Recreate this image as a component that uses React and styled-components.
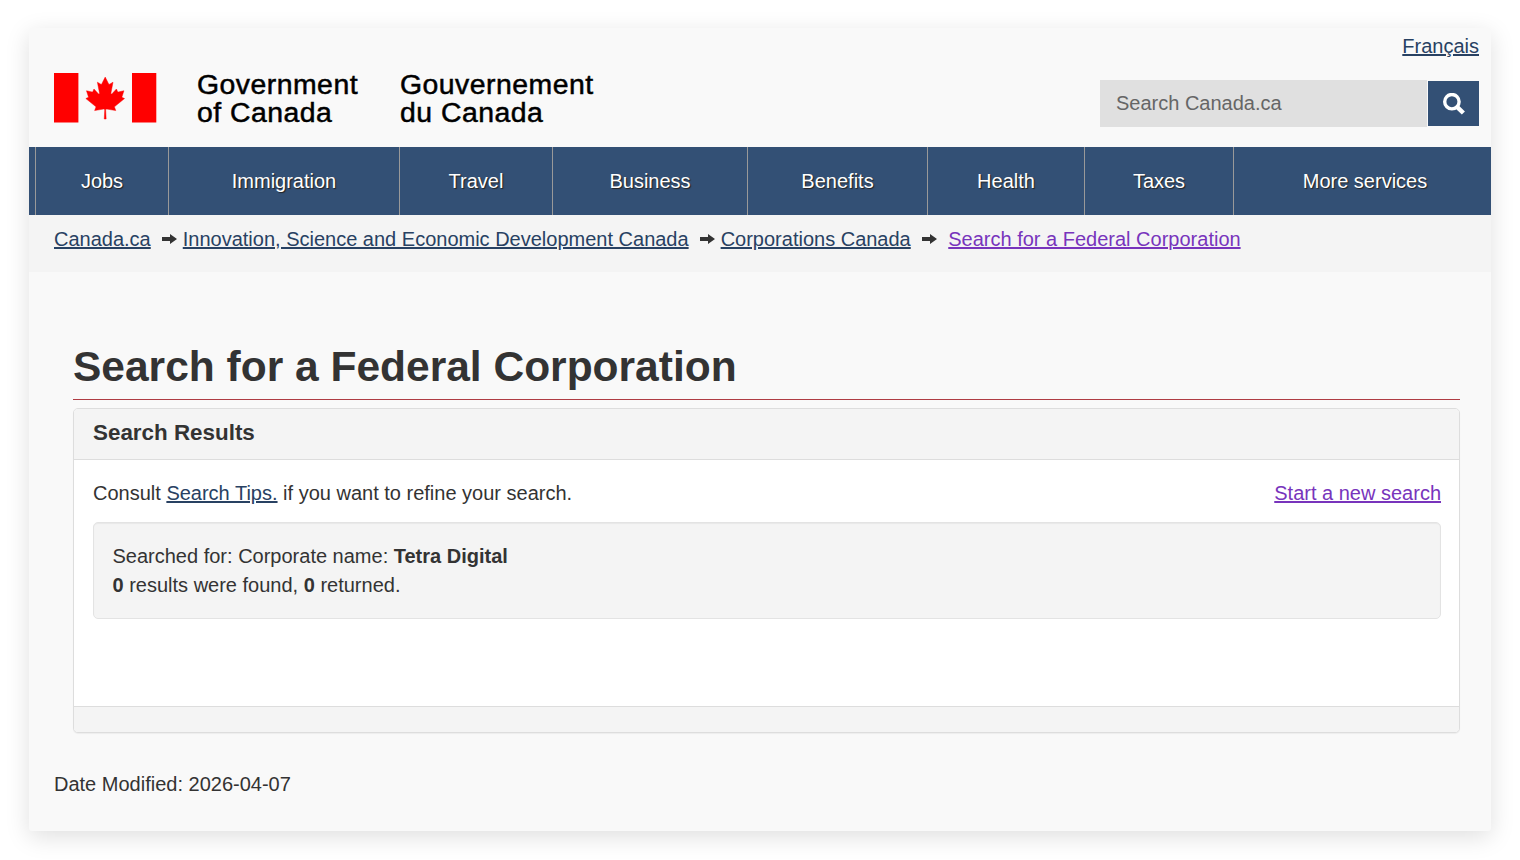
import React from 'react';
import styled, { createGlobalStyle } from 'styled-components';

const menu = [
  { text: 'Jobs', width: 133 },
  { text: 'Immigration', width: 231 },
  { text: 'Travel', width: 153 },
  { text: 'Business', width: 195 },
  { text: 'Benefits', width: 180 },
  { text: 'Health', width: 157 },
  { text: 'Taxes', width: 149 },
];

const crumbs = [
  { text: 'Canada.ca' },
  { text: 'Innovation, Science and Economic Development Canada' },
  { text: 'Corporations Canada' },
  { text: 'Search for a Federal Corporation', visited: true },
];

const GlobalStyle = createGlobalStyle`
  * {
    box-sizing: border-box;
  }
  body {
    min-height: 860px;
    margin: 0;
    padding: 28px 29px 29px;
    background: #fff;
    color: #333;
    font-family: 'Liberation Sans', Arial, sans-serif;
    font-size: 20px;
    line-height: 29px;
  }
`;

const Page = styled.div`
  width: 1462px;
  height: 803px;
  background: #f9f9f9;
  border-radius: 3px;
  box-shadow: 0 6px 24px rgba(0, 0, 0, 0.13);
`;
const Link = styled.a`
  color: ${({ $visited }) => ($visited ? '#7834bc' : '#284162')};
  text-decoration: underline;
  cursor: pointer;
`;

const Header = styled.header`
  display: flex;
  justify-content: space-between;
  height: 119px;
  padding: 0 12px 0 25px;
`;
const Brand = styled.div`
  display: flex;
  padding-top: 45px;
`;
const Flag = styled.svg`
  display: block;
  width: 103px;
  height: 50px;
`;
const BrandText = styled.div`
  width: ${({ $width }) => $width}px;
  color: #000;
  font-size: 28.4px;
  line-height: 28px;
  letter-spacing: 0.48px;
  white-space: nowrap;
  -webkit-text-stroke: 0.5px #000;
`;
const BrandNames = styled.div`
  display: flex;
  margin: -3px 0 0 40px;
`;
const Tools = styled.div`
  display: flex;
  flex-direction: column;
  align-items: flex-end;
  padding-top: 4px;
`;
const SearchForm = styled.form`
  display: flex;
  align-items: center;
  gap: 1px;
  margin-top: 19px;
`;
const SearchInput = styled.input`
  width: 327px;
  height: 47px;
  padding: 0 16px;
  border: 0;
  background: #e0e0e0;
  font: inherit;

  &::placeholder {
    color: #666;
    opacity: 1;
  }
`;
const SearchButton = styled.button`
  display: flex;
  align-items: center;
  justify-content: center;
  width: 51px;
  height: 45px;
  padding: 0;
  border: 0;
  background: #335075;
`;

const Menu = styled.nav`
  display: flex;
  height: 68px;
  padding-left: 6px;
  background: #335075;
`;
const MenuItem = styled.a`
  display: flex;
  align-items: center;
  justify-content: center;
  width: ${({ $width }) => $width}px;
  border-left: 1px solid #999;
  color: #fff;
  text-shadow: 1px 1px 1px #222;
`;
const LastMenuItem = styled(MenuItem)`
  width: auto;
  flex: 1;
  padding-left: 5px;
`;

const Breadcrumb = styled.div`
  display: flex;
  height: 57px;
  padding: 10px 25px 0;
  background: #f4f4f4;
  white-space: nowrap;
`;
const Arrow = styled.svg`
  flex: none;
  width: 15px;
  height: 11px;
  margin: 9px ${({ $gap }) => $gap}px 0 11.5px;
`;

const Main = styled.main`
  padding: 66px 31px 0 44px;
`;
const Title = styled.h1`
  height: 62px;
  margin: 0 0 8px;
  border-bottom: 1px solid #af3c43;
  font-size: 42.5px;
  line-height: 58px;
`;
const Panel = styled.section`
  display: flex;
  flex-direction: column;
  height: 325px;
  border: 1px solid #ddd;
  border-radius: 5px;
  background: #fff;
  box-shadow: 0 1px 1px rgba(0, 0, 0, 0.05);
  overflow: hidden;
`;
const PanelHeading = styled.h2`
  height: 51px;
  margin: 0;
  padding: 9px 19px;
  border-bottom: 1px solid #ddd;
  background: #f4f4f4;
  font-size: 22.4px;
  line-height: 29px;
`;
const PanelBody = styled.div`
  flex: 1;
  padding: 19px 18px 0 19px;
`;
const PanelFooter = styled.div`
  height: 26px;
  border-top: 1px solid #ddd;
  background: #f4f4f4;
`;
const Row = styled.div`
  display: flex;
  justify-content: space-between;
`;
const Well = styled.div`
  height: 97px;
  margin-top: 14px;
  padding: 19px 18.5px;
  border: 1px solid #e3e3e3;
  border-radius: 5px;
  background: #f4f4f4;
  box-shadow: inset 0 1px 1px rgba(0, 0, 0, 0.05);
`;
const DateModified = styled.footer`
  padding: 37px 25px 0;
`;

const CanadaFlag = () => (
  <Flag viewBox="0 0 103 50">
    <path fill="#f00" d="M0 0h24.4v49.6H0zM78 0h24.3v49.6H78z" />
    <path
      fill="#f00"
      stroke="#f00"
      strokeWidth="45"
      transform="translate(51.2 24.9) scale(.0104)"
      d="m-90 2030 45-863a95 95 0 0 0-111-98l-859 151 116-320a65 65 0 0 0-20-73l-941-762 212-99a65 65 0 0 0 34-79l-186-572 542 115a65 65 0 0 0 73-38l105-247 423 454a65 65 0 0 0 111-57l-204-1052 327 189a65 65 0 0 0 91-27l332-652 332 652a65 65 0 0 0 91 27l327-189-204 1052a65 65 0 0 0 111 57l423-454 105 247a65 65 0 0 0 73 38l542-115-186 572a65 65 0 0 0 34 79l212 99-941 762a65 65 0 0 0-20 73l116 320-859-151a95 95 0 0 0-111 98l45 863z"
    />
  </Flag>
);

const SearchIcon = () => (
  <svg width="22" height="22" viewBox="0 0 22 22" fill="none" stroke="#fff">
    <circle cx="8.9" cy="8.7" r="7.2" strokeWidth="3.4" />
    <path d="M14 13.8l6.4 6.2" strokeWidth="4.4" />
  </svg>
);

const App = () => {
  return (
    <>
      <GlobalStyle />
      <Page>
        <Header>
          <Brand>
            <CanadaFlag />
            <BrandNames>
              <BrandText $width={203}>
                Government
                <br />
                of Canada
              </BrandText>
              <BrandText $width={200}>
                Gouvernement
                <br />
                du Canada
              </BrandText>
            </BrandNames>
          </Brand>
          <Tools>
            <Link>Français</Link>
            <SearchForm>
              <SearchInput placeholder="Search Canada.ca" />
              <SearchButton type="button" aria-label="Search">
                <SearchIcon />
              </SearchButton>
            </SearchForm>
          </Tools>
        </Header>
        <Menu>
          {menu.map(({ text, width }) => (
            <MenuItem key={text} $width={width}>
              {text}
            </MenuItem>
          ))}
          <LastMenuItem>More services</LastMenuItem>
        </Menu>
        <Breadcrumb>
          {crumbs.map(({ text, visited }, key) => (
            <React.Fragment key={key}>
              {key > 0 && (
                <Arrow viewBox="0 0 15 11" $gap={visited ? 11 : 5.5}>
                  <path fill="#333" d="M0 3h8V0l7 5-7 5V7H0z" />
                </Arrow>
              )}
              <Link $visited={visited}>{text}</Link>
            </React.Fragment>
          ))}
        </Breadcrumb>
        <Main>
          <Title>Search for a Federal Corporation</Title>
          <Panel>
            <PanelHeading>Search Results</PanelHeading>
            <PanelBody>
              <Row>
                <span>
                  Consult <Link>Search Tips.</Link> if you want to refine your search.
                </span>
                <Link $visited>Start a new search</Link>
              </Row>
              <Well>
                Searched for: Corporate name: <strong>Tetra Digital</strong>
                <br />
                <strong>0</strong> results were found, <strong>0</strong> returned.
              </Well>
            </PanelBody>
            <PanelFooter />
          </Panel>
        </Main>
        <DateModified>Date Modified: 2026-04-07</DateModified>
      </Page>
    </>
  );
};

export default App;
